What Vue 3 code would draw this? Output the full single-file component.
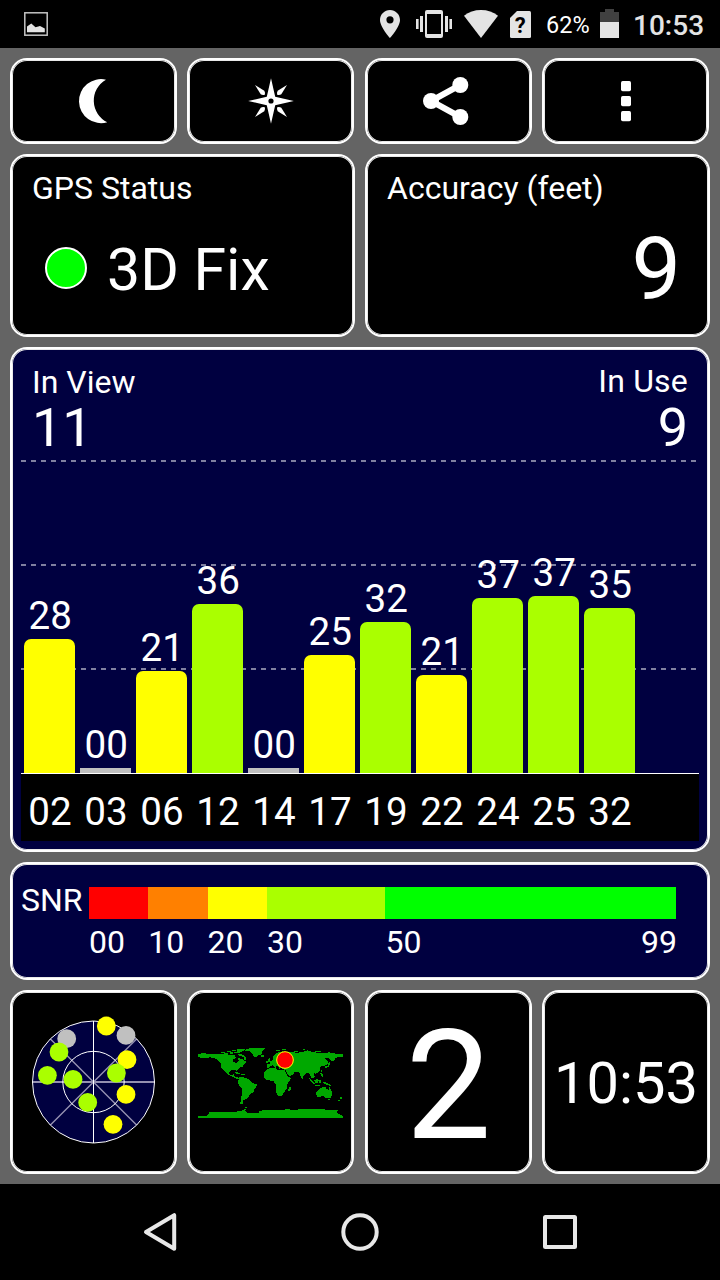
<template>
    <div class="screen">
        <header class="status-bar">
            <svg class="notification" width="24" height="24" viewBox="0 0 24 24">
                <rect x="0.8" y="0.8" width="22.4" height="22.4" fill="none" stroke="#c4c4c4" stroke-width="1.5" />
                <path d="M3 20.300V14.500L7.300 11.500 11.500 15.300 16 14 20.800 16.500V20.300z" fill="#e4e4e4" />
            </svg>
            <div class="status-icons">
                <svg class="pin" width="20" height="30" viewBox="0 0 20 30">
                    <path
                        fill-rule="evenodd"
                        d="M10 1C4.5 1 0 5.4 0 11c0 7.2 10 18 10 18s10-10.8 10-18C20 5.4 15.5 1 10 1zm0 6.200a3.6 3.6 0 1 1 0 7.200a3.6 3.6 0 0 1 0-7.200z"
                    />
                </svg>
                <svg class="vibrate" width="36" height="30" viewBox="0 0 36 30">
                    <path
                        fill-rule="evenodd"
                        d="M11 1h14a2 2 0 0 1 2 2v24a2 2 0 0 1-2 2H11a2 2 0 0 1-2-2V3a2 2 0 0 1 2-2zm0 4v20h14V5z"
                    />
                    <path d="M0 10h2.600v10H0zM4 7h3v16H4zM29 7h3v16h-3zM33.400 10H36v10h-2.600z" />
                </svg>
                <svg class="wifi" width="34" height="30" viewBox="0 0 34 30">
                    <path d="M17 29 0 6.800C4.700 3 10.500 1 17 1s12.300 2 17 5.800z" />
                </svg>
                <svg class="sim" width="21" height="30" viewBox="0 0 21 30">
                    <path d="M7 2h12.500a1.500 1.500 0 0 1 1.500 1.500v24a1.500 1.500 0 0 1-1.500 1.500h-18A1.500 1.500 0 0 1 0 27.500V9z" />
                    <text x="10.300" y="24" text-anchor="middle">?</text>
                </svg>
                <span class="battery-level">62%</span>
                <svg class="battery" width="19" height="30" viewBox="0 0 19 30">
                    <path d="M5 0h9v3h5v10H0V3h5z" fill="#404040" />
                    <path d="M0 13h19v16H0z" />
                </svg>
                <span class="status-clock">10:53</span>
            </div>
        </header>

        <main class="dashboard">
            <button class="tile small" type="button" aria-label="Night mode">
                <svg width="61" height="60" viewBox="-0.5 0 61 60">
                    <path d="M42.500 8.700A22 22 0 1 0 43.800 51.200 24 24 0 0 1 42.500 8.700z" />
                </svg>
            </button>
            <button class="tile small" type="button" aria-label="Compass">
                <svg width="61" height="60" viewBox="-0.5 0 61 60">
                    <path
                        fill-rule="evenodd"
                        d="M30.500 7.200 34.700 25.800 53.300 30 34.700 34.200 30.500 52.800 26.300 34.200 7.700 30 26.300 25.800zM30.500 27.400a2.600 2.600 0 1 0 0 5.200a2.600 2.600 0 0 0 0-5.200z"
                    />
                    <path
                        v-for="angle in [0, 90, 180, 270]"
                        :key="angle"
                        :transform="`rotate(${angle} 30.5 30)`"
                        d="M14.500 14 23.800 19.700Q25 21.500 24.300 23.800 22 24.500 20.200 23.300z"
                    />
                </svg>
            </button>
            <button class="tile small" type="button" aria-label="Share">
                <svg width="61" height="60" viewBox="-0.5 0 61 60">
                    <path d="M41.800 14 12.500 30l29.300 16" fill="none" stroke="#fff" stroke-width="6" />
                    <circle cx="41.800" cy="14" r="8" />
                    <circle cx="12.500" cy="30" r="8" />
                    <circle cx="41.800" cy="46" r="8" />
                </svg>
            </button>
            <button class="tile small" type="button" aria-label="More">
                <svg width="61" height="60" viewBox="-0.5 0 61 60">
                    <rect v-for="y in [10, 25, 40]" :key="y" x="25.500" :y="y" width="10" height="10.300" rx="1.700" />
                </svg>
            </button>

            <section class="tile wide">
                <div class="label">GPS Status</div>
                <div class="fix">
                    <span class="led"></span>
                    <span>3D Fix</span>
                </div>
            </section>
            <section class="tile wide">
                <div class="label">Accuracy (feet)</div>
                <div class="accuracy">9</div>
            </section>

            <section class="tile full chart">
                <div class="chart-head">
                    <div>
                        <div class="label">In View</div>
                        <div class="count">11</div>
                    </div>
                    <div class="in-use">
                        <div class="label">In Use</div>
                        <div class="count">9</div>
                    </div>
                </div>
                <div class="plot">
                    <div v-for="sat in satellites" :key="sat.id" class="column">
                        <span>{{ sat.snr }}</span>
                        <div class="bar" :class="sat.level" :style="{ height: sat.height + 'px' }"></div>
                    </div>
                </div>
                <div class="ids">
                    <span v-for="sat in satellites" :key="sat.id">{{ sat.id }}</span>
                </div>
            </section>

            <section class="tile full snr">
                <div class="label snr-label">SNR</div>
                <div class="scale">
                    <div v-for="band in bands" :key="band.from" class="band" :style="{ flexGrow: band.span }">
                        <div class="swatch" :style="{ background: band.color }"></div>
                        <div class="ticks">
                            <span>{{ band.from }}</span>
                            <span v-if="band.to">{{ band.to }}</span>
                        </div>
                    </div>
                </div>
            </section>

            <section class="tile small">
                <svg width="163" height="180" viewBox="12 992 163 180">
                    <circle cx="93.500" cy="1082" r="61" fill="#000040" />
                    <g fill="none" stroke="#9490b0" stroke-width="1.400">
                        <path d="M50.400 1038.900l86.200 86.200M50.400 1125.100l86.200-86.200" />
                        <path d="M32.500 1082h122" stroke-width="2" />
                    </g>
                    <g fill="none" stroke="#fff">
                        <path d="M93.500 1021v122" />
                        <circle cx="93.500" cy="1082" r="61" />
                        <circle cx="93.500" cy="1082" r="30.700" />
                    </g>
                    <circle v-for="(dot, i) in sky" :key="i" :cx="dot[0]" :cy="dot[1]" r="9.400" :fill="dot[2]" />
                </svg>
            </section>
            <section class="tile small">
                <!-- equirectangular world map, three units per pixel -->
                <svg class="map" width="145" height="70" viewBox="24 54 435 210">
                    <g fill="#00a800" shape-rendering="crispEdges">
                        <path v-for="(land, i) in lands" :key="i" :d="land" />
                    </g>
                    <circle cx="285" cy="90" r="25" fill="#f00" stroke="#ff0" stroke-width="3" />
                </svg>
            </section>
            <section class="tile small">
                <span class="digit">2</span>
            </section>
            <section class="tile small clock-tile">
                <span class="clock">10:53</span>
            </section>
        </main>

        <nav class="nav-bar">
            <svg width="40" height="40" viewBox="0 0 40 40">
                <path d="M34.200 3.200v33.600L6 20z" />
            </svg>
            <svg width="40" height="40" viewBox="0 0 40 40">
                <circle cx="20" cy="20" r="16.700" />
            </svg>
            <svg width="40" height="40" viewBox="0 0 40 40">
                <rect x="5" y="5" width="30" height="30" rx="0.500" />
            </svg>
        </nav>
    </div>
</template>

<script setup>
const satellites = [
    { id: '02', snr: '28', height: 134, level: 'fair' },
    { id: '03', snr: '00', height: 5, level: 'none' },
    { id: '06', snr: '21', height: 102, level: 'fair' },
    { id: '12', snr: '36', height: 169, level: 'good' },
    { id: '14', snr: '00', height: 5, level: 'none' },
    { id: '17', snr: '25', height: 118, level: 'fair' },
    { id: '19', snr: '32', height: 151, level: 'good' },
    { id: '22', snr: '21', height: 98, level: 'fair' },
    { id: '24', snr: '37', height: 175, level: 'good' },
    { id: '25', snr: '37', height: 177, level: 'good' },
    { id: '32', snr: '35', height: 165, level: 'good' },
]

const bands = [
    { from: '00', span: 10, color: '#ff0000' },
    { from: '10', span: 10, color: '#ff8000' },
    { from: '20', span: 10, color: '#ffff00' },
    { from: '30', span: 20, color: '#aaff00' },
    { from: '50', to: '99', span: 49, color: '#00ff00' },
]

const sky = [
    [66.7, 1038.7, '#c0c0c0'],
    [126, 1035.4, '#c0c0c0'],
    [106.3, 1026, '#ffff00'],
    [59, 1052, '#aaff00'],
    [127, 1059.7, '#ffff00'],
    [116.4, 1073, '#aaff00'],
    [47.4, 1075.3, '#aaff00'],
    [73, 1079.4, '#aaff00'],
    [126, 1094.4, '#ffff00'],
    [87.7, 1102.4, '#aaff00'],
    [113, 1124.3, '#ffff00'],
]

const lands = [
    // north america
    'M24 72H34V69L60 72 95 72 118 76 135 76 138 84 128 90 130 96 140 99 146 92 145 84 158 88 170 96 162 102 158 110 150 112 142 119 141 126 137 121 122 121 116 130 124 136 132 132 132 139 142 142 148 148 140 146 122 138 112 132 104 122 94 114 92 98 78 86 60 82 46 84 32 83 24 80z',
    // arctic islands
    'M92 66h12v4H92zM102 69h12v5h-12zM110 62h12v4h-12zM120 67h9v6h-9zM125 59h14v4h-14zM132 65h10v5h-10zM140 57h26v3l-10 5-8 3h-6zM144 73l10-1 10 5 4 7-2 7-6-3 2-6-12-4z',
    // greenland, iceland
    'M166 59L180 55 224 55 222 60 217 63 217 72 206 76 198 83 191 80 187 71 180 64 166 62zM213 76h10v4h-10z',
    // caribbean
    'M134 126h9v3h8v3h-8l-9-3zM152 131h13v3h-13z',
    // south america
    'M147 143L154 140 168 144 180 150 184 157 200 163 200 168 193 178 191 186 180 192 176 201 168 207 160 210 158 219 152 217 152 205 156 192 157 175 149 168 144 158zM150 217h10v4h-10z',
    // africa
    'M232 116L256 113 260 118 270 121 284 121 290 134 296 142 304 143 296 156 290 164 290 176 282 188 276 197 264 198 258 184 257 164 250 152 232 151 222 142 223 128zM298 172l5-2-2 12-4 4-3-4z',
    // europe
    'M231 112V102H240L238 95 247 91 250 86 248 80 256 72 266 67 278 64 285 66V112L272 113 268 116 264 110 260 106 256 114 248 106 240 109 236 114zM234 90l3-7 3 5 3 8h-8zM228 94h5v5h-5zM257 59h12v4h-12z',
    // asia
    'M270 65L300 67 320 69 345 64 352 61 366 66 380 68 425 70 459 72V80L446 80 436 84 432 92 424 94 420 86 412 84 402 86 412 90 414 100 404 108 394 108 390 114 388 126 378 131 372 130 374 142 366 146 362 138 358 130 350 128 342 136 337 147 332 140 328 128 318 126 311 126 312 131 300 138 295 136 286 120 276 117 272 112z',
    'M277 58h10v3h-10zM305 69l10-6 9 1-9 4-5 5zM338 57h8v4h-8zM376 62h16v3h-16zM413 67h6v3h-6zM416 96h4v10h-4zM404 107h10v-7h4v9l-8 4h-6zM393 119h3v8h-3z',
    // maritime southeast asia
    'M358 145l7 4 8 9 3 6-6-2-8-9zM373 151l9-6 4 6-3 9-8-1zM374 165h16v3h-16zM388 149h4v11h-4zM391 130h6l3 12-5-2zM399 156l12 2 10 6 3 5-10-3-8-4-7-3z',
    // australia, new zealand
    'M379 186L387 179 393 174 401 171 408 172 410 178 416 179 418 170 422 178 427 187 426 196 422 203 414 206 407 203 399 198 390 200 380 201z',
    'M414 207h6v4h-6zM450 201h6v6h-4zM443 209h7v3h-5z',
    // antarctica
    'M24 258H50L57 250 55 246 115 246 150 244 162 240 160 236 168 236 165 243 172 250 205 250 208 242 240 240 300 238 305 241 345 236 395 236 410 240 436 240 446 242 438 246 442 250 459 258V264H24zM165 232h6v3h-6z',
]
</script>

<style>
body {
    margin: 0;
    background: #000;
}
</style>

<style scoped>
.screen {
    width: 720px;
    height: 1280px;
    overflow: hidden;
    display: flex;
    flex-direction: column;
    background: #000;
    color: #fff;
    font-family: Roboto, 'Liberation Sans', sans-serif;
}

.screen svg {
    display: block;
    flex: none;
}

.status-bar {
    box-sizing: border-box;
    height: 48px;
    padding: 0 16px 0 24px;
    display: flex;
    align-items: center;
    justify-content: space-between;
}

.status-icons {
    display: flex;
    align-items: center;
    fill: #e4e4e4;
}

.pin {
    margin-right: 16px;
}

.vibrate,
.wifi {
    margin-right: 12px;
}

.sim {
    margin-right: 15px;
}

.sim text {
    fill: #000;
    font-size: 22px;
    font-weight: 700;
}

.battery-level {
    width: 54px;
    padding-top: 2px;
    font-size: 23.5px;
    line-height: 50px;
}

.battery {
    margin-right: 14px;
}

.status-clock {
    width: 71px;
    padding-top: 3px;
    color: #e4e4e4;
    font-size: 28px;
    font-weight: 500;
    line-height: 50px;
}

.dashboard {
    box-sizing: border-box;
    height: 1136px;
    padding: 10px;
    display: grid;
    grid-template-columns: 167px 168px 167px 168px;
    grid-template-rows: 86px 183px 505px 118px 184px;
    gap: 10px;
    background: #646464;
}

.tile {
    box-sizing: border-box;
    min-width: 0;
    border: 2px solid #fff;
    border-radius: 17px;
    background: #000;
    box-shadow: inset 0 0 0 1px #e8e8e8;
    color: #fff;
    font-family: inherit;
}

.small {
    width: 167px;
    padding: 0;
    display: flex;
    align-items: center;
    justify-content: center;
    fill: #fff;
}

.wide {
    grid-column: span 2;
    padding: 16px 20px 0;
}

.full {
    grid-column: 1 / -1;
    background: #000040;
}

.label {
    font-size: 32px;
    line-height: 32px;
}

.fix {
    margin-top: 36px;
    padding-left: 13px;
    display: flex;
    align-items: center;
    gap: 20px;
    font-size: 59px;
    line-height: 60px;
}

.led {
    box-sizing: border-box;
    width: 42px;
    height: 42px;
    margin-bottom: 5px;
    border: 2px solid #fff;
    border-radius: 50%;
    background: #0f0;
}

.accuracy {
    margin-top: 20px;
    padding-right: 7px;
    font-size: 88px;
    line-height: 89px;
    text-align: right;
}

.chart {
    padding: 0 9px;
}

.chart-head {
    box-sizing: border-box;
    height: 111px;
    padding: 17px 11px 0;
    display: flex;
    justify-content: space-between;
}

.count {
    margin-top: 3px;
    font-size: 54px;
    line-height: 54px;
}

.in-use {
    text-align: right;
}

.in-use .label {
    margin-top: -1px;
    letter-spacing: 0.2px;
}

.in-use .count {
    margin-top: 4px;
}

.plot {
    box-sizing: border-box;
    height: 313px;
    padding-left: 3px;
    display: flex;
    align-items: flex-end;
    gap: 5px;
    background-image:
        repeating-linear-gradient(90deg, #8080a0 0 5px, transparent 5px 10px),
        repeating-linear-gradient(90deg, #8080a0 0 5px, transparent 5px 10px),
        repeating-linear-gradient(90deg, #8080a0 0 5px, transparent 5px 10px);
    background-position: 0 0, 0 104px, 0 208px;
    background-size: 676px 2px;
    background-repeat: no-repeat;
}

.column {
    width: 51px;
    display: flex;
    flex-direction: column;
    align-items: center;
    font-size: 38.6px;
    line-height: 40px;
}

.column span {
    margin-bottom: 3px;
    padding-left: 1.5px;
}

.bar {
    width: 51px;
    border-radius: 7px 7px 0 0;
}

.fair {
    background: #ff0;
}

.good {
    background: #af0;
}

.none {
    border-radius: 0;
    background: #c0c0c0;
}

.ids {
    box-sizing: border-box;
    height: 68px;
    padding-left: 3.5px;
    border-top: 1px solid #fff;
    display: flex;
    gap: 5px;
    background: #000;
    font-size: 38.6px;
    line-height: 76px;
}

.ids span {
    width: 51px;
    text-align: center;
}

.snr {
    padding: 23px 32px 0 9px;
    display: flex;
}

.snr-label {
    width: 68px;
    flex: none;
    line-height: 26px;
}

.scale {
    flex: 1;
    display: flex;
}

.band {
    flex-basis: 0;
    min-width: 0;
}

.swatch {
    height: 32px;
}

.ticks {
    margin-top: 7px;
    display: flex;
    justify-content: space-between;
    font-size: 32px;
    line-height: 32px;
}

.band:last-child .ticks {
    margin-right: -1px;
}

.map {
    margin-top: 2px;
}

.digit {
    padding-top: 7px;
    font-size: 153px;
    line-height: 173px;
}

.clock-tile {
    width: 168px;
}

.clock {
    margin-top: 2px;
    font-size: 57.8px;
    line-height: 64px;
}

.nav-bar {
    height: 96px;
    padding: 0 60px;
    display: grid;
    grid-template-columns: repeat(3, 1fr);
    place-items: center;
    fill: none;
    stroke: #e8e8e8;
    stroke-width: 4;
    stroke-linejoin: round;
}
</style>
